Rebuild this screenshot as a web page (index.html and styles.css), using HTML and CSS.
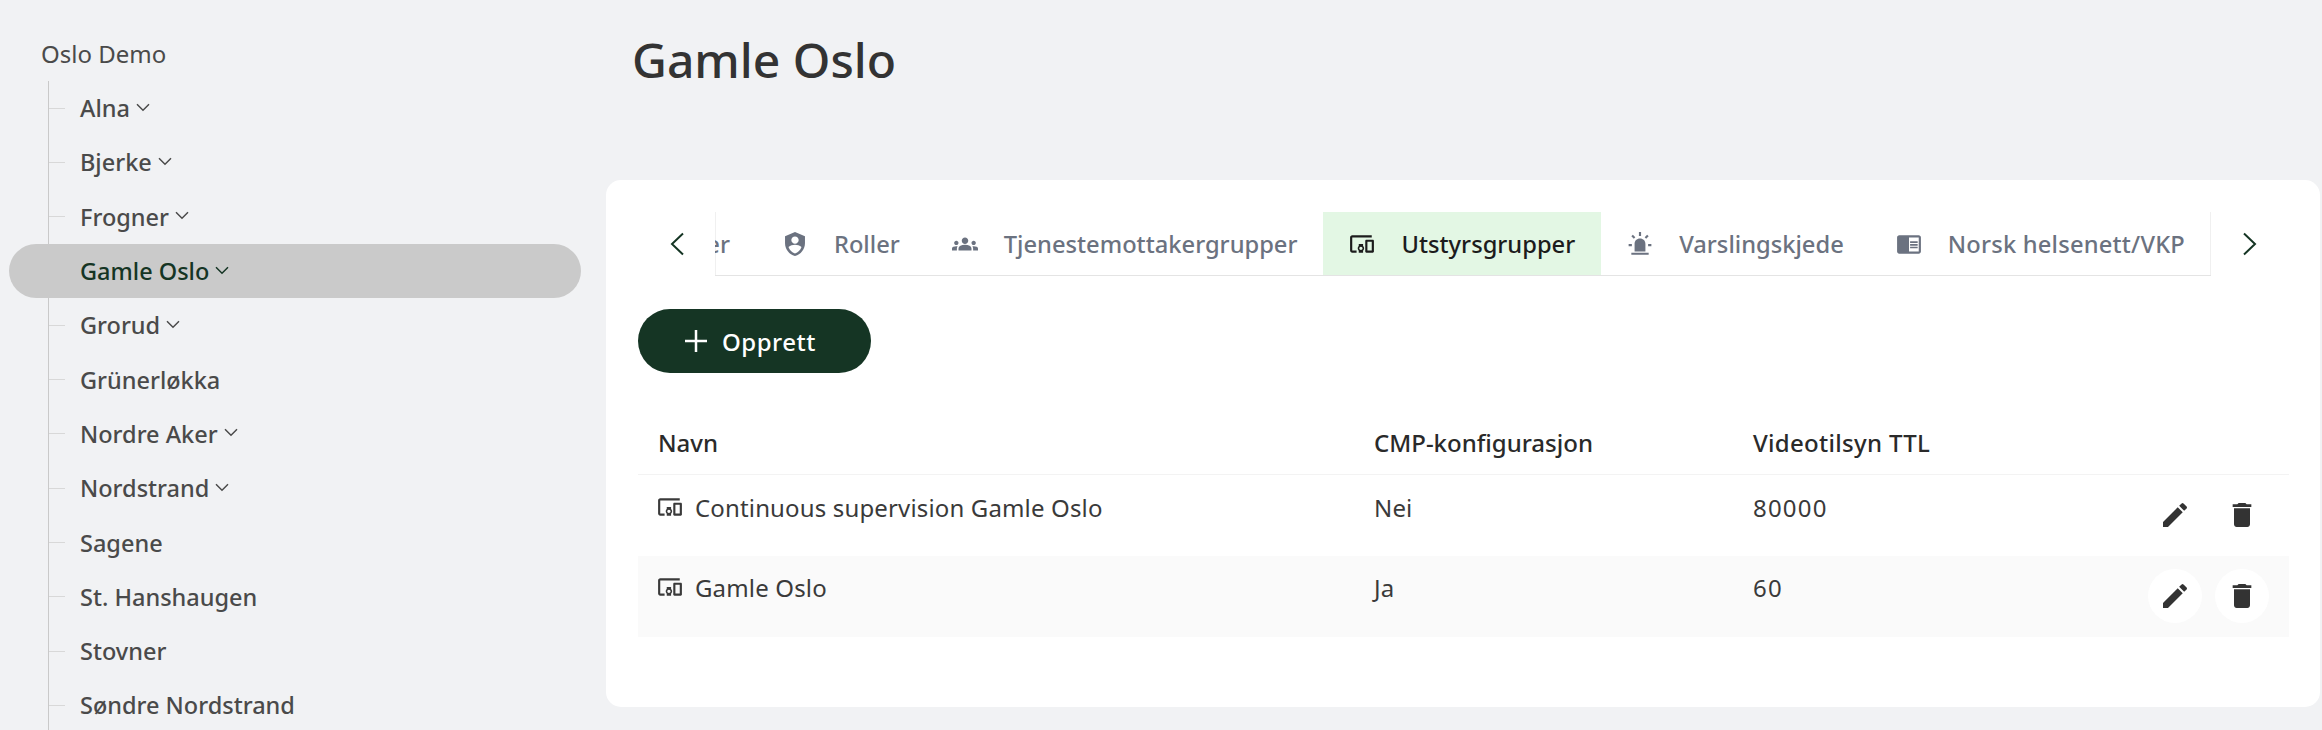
FILE: index.html
```html
<!DOCTYPE html>
<html lang="no">
<head>
<meta charset="UTF-8">
<meta name="viewport" content="width=device-width, initial-scale=1">
<title>Gamle Oslo</title>
<link rel="stylesheet" href="styles.css">
</head>
<body>
<div id="app">

<!-- Sidebar tree -->
<div class="sidebar">
<div class="tree-root">Oslo Demo</div>
<ul class="tree">
<li class="tree-row"><span class="twig"></span>Alna<svg class="chev" viewBox="0 0 12 12"><path d="M2 3.500l4 4 4-4"/></svg></li>
<li class="tree-row"><span class="twig"></span>Bjerke<svg class="chev" viewBox="0 0 12 12"><path d="M2 3.500l4 4 4-4"/></svg></li>
<li class="tree-row"><span class="twig"></span>Frogner<svg class="chev" viewBox="0 0 12 12"><path d="M2 3.500l4 4 4-4"/></svg></li>
<li class="tree-row selected">Gamle Oslo<svg class="chev" viewBox="0 0 12 12"><path d="M2 3.500l4 4 4-4"/></svg></li>
<li class="tree-row"><span class="twig"></span>Grorud<svg class="chev" viewBox="0 0 12 12"><path d="M2 3.500l4 4 4-4"/></svg></li>
<li class="tree-row"><span class="twig"></span>Grünerløkka</li>
<li class="tree-row"><span class="twig"></span>Nordre Aker<svg class="chev" viewBox="0 0 12 12"><path d="M2 3.500l4 4 4-4"/></svg></li>
<li class="tree-row"><span class="twig"></span>Nordstrand<svg class="chev" viewBox="0 0 12 12"><path d="M2 3.500l4 4 4-4"/></svg></li>
<li class="tree-row"><span class="twig"></span>Sagene</li>
<li class="tree-row"><span class="twig"></span>St. Hanshaugen</li>
<li class="tree-row"><span class="twig"></span>Stovner</li>
<li class="tree-row"><span class="twig"></span>Søndre Nordstrand</li>
</ul>
</div>

<!-- Main -->
<div class="main">
<h1 class="page-title">Gamle Oslo</h1>

<div class="card">
<div class="tabs">
<button class="tab-arrow"><svg viewBox="0 0 24 24"><path d="M18 1.500 7 12l11 10.500"/></svg></button>
<div class="tab-scroller">
<div class="tab">er</div>
<div class="tab"><svg class="icon" viewBox="0 0 24 24"><path d="M12 1 2.800 4.800v6.400c0 5.500 3.900 10.500 9.200 11.800 5.300-1.300 9.200-6.300 9.200-11.800V4.800L12 1zm0 4c1.900 0 3.400 1.500 3.400 3.400s-1.500 3.400-3.400 3.400-3.400-1.500-3.400-3.400S10.100 5 12 5zm0 15.800c-2.800-.9-5-3.200-6-6.100 1.700-1.200 3.800-1.900 6-1.900s4.300.7 6 1.900c-1 2.900-3.200 5.200-6 6.100z"/></svg>Roller</div>
<div class="tab"><svg class="icon" viewBox="0 0 24 24"><path d="M12 12.750c1.630 0 3.070.39 4.240.9 1.080.48 1.760 1.560 1.760 2.730V18H6v-1.610c0-1.180.68-2.260 1.760-2.730 1.170-.52 2.610-.91 4.240-.91zM4 13c1.100 0 2-.9 2-2s-.9-2-2-2-2 .9-2 2 .9 2 2 2zm1.130 1.100c-.37-.06-.74-.1-1.130-.1-.99 0-1.930.21-2.780.58C.48 14.900 0 15.620 0 16.430V18h4.500v-1.610c0-.83.23-1.610.63-2.290zM20 13c1.100 0 2-.9 2-2s-.9-2-2-2-2 .9-2 2 .9 2 2 2zm4 3.430c0-.81-.48-1.530-1.220-1.850-.85-.37-1.790-.58-2.780-.58-.39 0-.76.04-1.130.1.4.68.63 1.460.63 2.290V18H24v-1.570zM12 6c1.660 0 3 1.340 3 3s-1.340 3-3 3-3-1.340-3-3 1.340-3 3-3z"/></svg>Tjenestemottakergrupper</div>
<div class="tab active"><svg class="icon" viewBox="0 0 24 24"><path d="M3 6h18V4H3c-1.100 0-2 .9-2 2v12c0 1.100.9 2 2 2h4v-2H3V6zm10 6H9v1.780c-.61.55-1 1.330-1 2.220s.39 1.670 1 2.220V20h4v-1.780c.61-.55 1-1.340 1-2.220s-.39-1.670-1-2.220V12zm-2 5.500c-.83 0-1.500-.67-1.500-1.500s.67-1.500 1.500-1.500 1.500.67 1.500 1.500-.67 1.500-1.500 1.500zM22 8h-6c-.5 0-1 .5-1 1v10c0 .5.5 1 1 1h6c.5 0 1-.5 1-1V9c0-.5-.5-1-1-1zm-1 10h-4v-8h4v8z"/></svg>Utstyrsgrupper</div>
<div class="tab"><svg class="icon" viewBox="0 0 24 24"><path d="M4 20h16v2H4zM12 7c-3 0-5 2.200-5 5v7h10v-7c0-2.800-2-5-5-5zM11 1h2v3.500h-2zM4 4.900l1.400-1.400 2.300 2.300-1.400 1.400zM16.300 5.800l2.300-2.300L20 4.900l-2.300 2.300zM1.500 12h3v2h-3zM19.500 12h3v2h-3z"/></svg>Varslingskjede</div>
<div class="tab"><svg class="icon" viewBox="0 0 24 24"><path d="M13 12h7v1.500h-7zm0-2.500h7V11h-7zm0 5h7V16h-7zM21 4H3c-1.100 0-2 .9-2 2v13c0 1.100.9 2 2 2h18c1.100 0 2-.9 2-2V6c0-1.100-.9-2-2-2zm0 15h-9V6h9v13z"/></svg>Norsk helsenett/VKP</div>
</div>
<button class="tab-arrow"><svg viewBox="0 0 24 24"><path d="M6 1.500 17 12 6 22.500"/></svg></button>
</div>

<button class="create-btn"><svg viewBox="0 0 24 24"><path d="M12 1v22M1 12h22"/></svg>Opprett</button>

<div class="table">
<div class="table-row table-head">
<div class="col-name">Navn</div>
<div class="col-cmp">CMP-konfigurasjon</div>
<div class="col-ttl">Videotilsyn TTL</div>
</div>
<div class="table-row">
<div class="col-name"><svg class="icon" viewBox="0 0 24 24"><path d="M3 6h18V4H3c-1.100 0-2 .9-2 2v12c0 1.100.9 2 2 2h4v-2H3V6zm10 6H9v1.780c-.61.55-1 1.330-1 2.220s.39 1.670 1 2.220V20h4v-1.780c.61-.55 1-1.340 1-2.220s-.39-1.670-1-2.220V12zm-2 5.500c-.83 0-1.500-.67-1.500-1.500s.67-1.500 1.500-1.500 1.500.67 1.500 1.500-.67 1.500-1.500 1.500zM22 8h-6c-.5 0-1 .5-1 1v10c0 .5.5 1 1 1h6c.5 0 1-.5 1-1V9c0-.5-.5-1-1-1zm-1 10h-4v-8h4v8z"/></svg>Continuous supervision Gamle Oslo</div>
<div class="col-cmp">Nei</div>
<div class="col-ttl num">80000</div>
<div class="col-actions">
<button class="round-btn"><svg viewBox="0 0 24 24"><path d="M3 17.250V21h3.750L17.810 9.940l-3.750-3.750L3 17.250zM20.710 7.040c.39-.39.39-1.020 0-1.410l-2.340-2.340a.9959.9959 0 0 0-1.410 0l-1.830 1.830 3.750 3.750 1.830-1.830z"/></svg></button>
<button class="round-btn"><svg viewBox="0 0 24 24"><path d="M6 19c0 1.100.9 2 2 2h8c1.100 0 2-.9 2-2V7H6v12zM19 4h-3.500l-1-1h-5l-1 1H5v2h14V4z"/></svg></button>
</div>
</div>
<div class="table-row striped">
<div class="col-name"><svg class="icon" viewBox="0 0 24 24"><path d="M3 6h18V4H3c-1.100 0-2 .9-2 2v12c0 1.100.9 2 2 2h4v-2H3V6zm10 6H9v1.780c-.61.55-1 1.330-1 2.220s.39 1.670 1 2.220V20h4v-1.780c.61-.55 1-1.340 1-2.220s-.39-1.670-1-2.220V12zm-2 5.500c-.83 0-1.500-.67-1.500-1.500s.67-1.500 1.500-1.500 1.500.67 1.500 1.500-.67 1.500-1.500 1.500zM22 8h-6c-.5 0-1 .5-1 1v10c0 .5.5 1 1 1h6c.5 0 1-.5 1-1V9c0-.5-.5-1-1-1zm-1 10h-4v-8h4v8z"/></svg>Gamle Oslo</div>
<div class="col-cmp">Ja</div>
<div class="col-ttl num">60</div>
<div class="col-actions">
<button class="round-btn filled"><svg viewBox="0 0 24 24"><path d="M3 17.250V21h3.750L17.810 9.940l-3.750-3.750L3 17.250zM20.710 7.040c.39-.39.39-1.020 0-1.410l-2.340-2.340a.9959.9959 0 0 0-1.410 0l-1.830 1.830 3.750 3.750 1.830-1.830z"/></svg></button>
<button class="round-btn filled"><svg viewBox="0 0 24 24"><path d="M6 19c0 1.100.9 2 2 2h8c1.100 0 2-.9 2-2V7H6v12zM19 4h-3.500l-1-1h-5l-1 1H5v2h14V4z"/></svg></button>
</div>
</div>
</div>
</div>
</div>

</div>
</body>
</html>
```

FILE: styles.css
```css
*{margin:0;padding:0;box-sizing:border-box;font-family:"Noto Sans",sans-serif;}
html,body{height:730px;overflow:hidden;}
body{background:#f1f2f4;color:#333;}
#app{display:flex;height:730px;}
button{border:none;background:none;cursor:pointer;}

/* Sidebar */
.sidebar{width:606px;height:730px;overflow:hidden;flex:none;padding:36px 0 0 9px;color:#4a4a4a;font-size:23.500px;font-weight:500;}
.tree-root{padding-left:32px;height:36px;line-height:36px;font-weight:400;font-size:24px;}
.tree{list-style:none;margin-top:9px;margin-left:39px;border-left:1px solid #c9c9c9;height:649px;}
.tree-row{display:flex;align-items:center;height:54.300px;white-space:nowrap;}
.twig{width:16px;height:1px;background:#d8d8d8;margin-right:15px;flex:none;}
.chev{width:18px;height:18px;margin-left:4px;fill:none;stroke:currentColor;stroke-width:1;margin-top:-1px;}
.selected{margin-left:-40px;width:572px;padding-left:71px;background:#cacaca;border-radius:28px;color:#153524;}

/* Main */
.main{flex:1;min-width:0;padding-right:2px;}
.page-title{font-size:48px;font-weight:500;line-height:60px;padding:30px 0 0 26px;height:180px;color:#333;}
.card{height:527px;background:#fff;border-radius:15px;padding:32px 32px 0;}

/* Tabs */
.tabs{display:flex;height:64px;}
.tab-arrow{width:77px;flex:none;display:flex;align-items:center;justify-content:center;}
.tab-arrow svg{width:24px;height:24px;fill:none;stroke:#153524;stroke-width:2;}
.tab-scroller{flex:1;min-width:0;display:flex;overflow:hidden;border-bottom:1px solid #e4e4e4;box-shadow:inset 1px 0 0 #f0f0f0,inset -1px 0 0 #f0f0f0;justify-content:flex-end;}
.tab{display:flex;align-items:center;gap:26px;padding:0 26px;height:64px;font-size:23.700px;font-weight:500;color:#6b7280;white-space:nowrap;flex:none;}
.tab:last-child{letter-spacing:.2px;}
.tab .icon{width:26px;height:26px;fill:#6b7280;flex:none;}
.tab.active{background:#e3f7e4;color:#1c1c1c;border-bottom:1px solid #153524;}
.tab.active .icon{fill:#1c1c1c;}
.create-btn{display:flex;align-items:center;gap:14px;width:233px;height:64px;margin-top:33px;padding-left:46px;background:#153524;border-radius:32px;color:#fff;font-size:24px;font-weight:500;letter-spacing:.5px;}
.create-btn svg{width:24px;height:24px;fill:none;stroke:#fff;stroke-width:2.500;}

/* Table */
.table{margin-top:38px;margin-right:-1px;font-size:24px;color:#3a3a3a;letter-spacing:.15px;}
.table-row{display:flex;height:81px;padding:0 20px;}
.table-head{height:64px;align-items:center;font-weight:500;color:#2a2a2a;border-bottom:1px solid #f3f3f3;letter-spacing:0;}
.striped{background:#fafafa;}
.col-name{width:716px;display:flex;gap:12px;padding-top:16px;}
.col-cmp{width:379px;padding-top:16px;}
.col-ttl{flex:1;padding-top:16px;}
.table-head .col-ttl{letter-spacing:.3px;}
.num{letter-spacing:1.200px;}
.table-head div{padding-top:0;}
.striped .col-name,.striped .col-cmp,.striped .col-ttl{padding-top:15px;}
.col-name .icon{width:26px;height:26px;fill:#3a3a3a;flex:none;margin-top:3px;margin-left:-1px;}
.col-actions{display:flex;gap:13px;padding-top:13px;margin-right:0;}
.round-btn{width:54px;height:54px;border-radius:50%;display:flex;align-items:center;justify-content:center;}
.round-btn svg{width:32px;height:32px;fill:#333;}
.round-btn.filled{background:#fff;}
```
